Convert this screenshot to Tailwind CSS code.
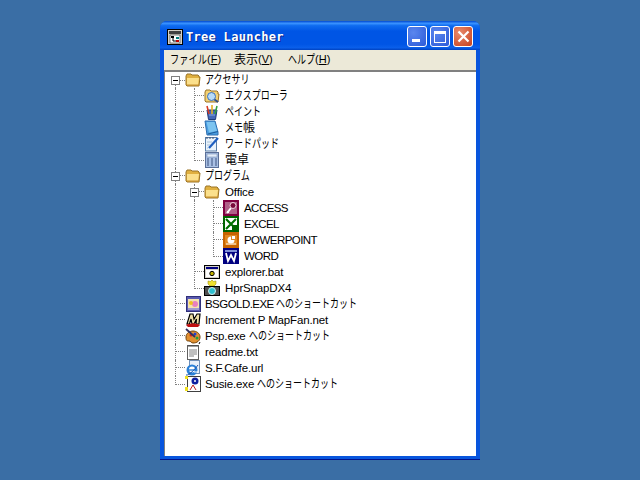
<!DOCTYPE html>
<html lang="en">
    <head>
        <meta charset="UTF-8" />
        <title>Tree Launcher</title>
        <script src="https://cdn.jsdelivr.net/npm/@tailwindcss/browser@4"></script>
    </head>
    <body class="bg-[#3a6ea5] h-screen overflow-hidden pt-[21px] pl-[160px] font-['Liberation_Sans','Noto_Sans_CJK_JP',sans-serif] text-[11.5px] text-black">
        <div class="w-[320px] h-[439px] flex flex-col rounded-t-[7px] overflow-hidden bg-[#0855dd] border-b border-[#00138c]">
            <!-- title bar -->
            <div class="h-[29px] shrink-0 flex items-center pt-[2px] pl-[7px] pr-[7px] bg-[linear-gradient(to_bottom,#0048d0_0%,#3a93ff_8%,#0f6cf0_16%,#0055e5_35%,#0055e5_80%,#0a5fea_92%,#0042c0_100%)]">
                <svg width="16" height="16" viewBox="0 0 16 16" class="shrink-0">
                    <rect x="0.5" y="0.5" width="15" height="15" fill="#d4d0c8" stroke="#000" />
                    <rect x="2" y="2" width="12" height="3" fill="#404040" />
                    <rect x="3" y="6" width="10" height="8" fill="#fff" stroke="#000" stroke-width="0.5" />
                    <rect x="4" y="7" width="3" height="2" fill="#000" />
                    <path d="M6 9v3h3" stroke="#000" fill="none" />
                    <rect x="9" y="8" width="3" height="2" fill="#008080" />
                    <rect x="9" y="11" width="3" height="2" fill="#c00000" />
                </svg>
                <div class="ml-[3px] font-['DejaVu_Sans_Mono',monospace] font-bold text-[12px] tracking-[0.3px] text-white [text-shadow:1px_1px_0_#0a2a8c]">Tree Launcher</div>
                <div class="ml-auto flex gap-[3px]">
                    <div class="w-[20px] h-[21px] rounded-[3px] border border-white bg-[radial-gradient(circle_at_30%_30%,#5a86ee,#2c5ad8)] flex items-end pl-[4px] pb-[4px]">
                        <div class="w-[8px] h-[3px] bg-white"></div>
                    </div>
                    <div class="w-[20px] h-[21px] rounded-[3px] border border-white bg-[radial-gradient(circle_at_30%_30%,#5a86ee,#2c5ad8)] flex items-center justify-center">
                        <div class="w-[12px] h-[12px] border border-white border-t-[3px]"></div>
                    </div>
                    <div class="w-[20px] h-[21px] rounded-[3px] border border-white bg-[radial-gradient(circle_at_30%_30%,#e88a6c,#c8401c)] flex items-center justify-center">
                        <svg width="13" height="13" viewBox="0 0 13 13"><path d="M1.5 1.5l10 10M11.5 1.5l-10 10" stroke="#fff" stroke-width="2.2" /></svg>
                    </div>
                </div>
            </div>

            <div class="flex-1 flex flex-col mx-[4px] mb-[3px] min-h-0">
                <!-- menu -->
                <div class="h-[20px] shrink-0 bg-[#ece9d8] flex items-center pl-[6px] text-[12px] whitespace-nowrap">
                    <div class="w-[64px] flex">
                        <span class="w-[37px]"><span class="inline-block origin-left scale-x-[0.77]">ファイル</span></span>
                        <span class="text-[11px]">(<span class="underline">F</span>)</span>
                    </div>
                    <div class="w-[54px] flex">
                        <span>表示</span>
                        <span class="text-[11px]">(<span class="underline">V</span>)</span>
                    </div>
                    <div class="flex">
                        <span class="w-[27px]"><span class="inline-block origin-left scale-x-[0.75]">ヘルプ</span></span>
                        <span class="text-[11px]">(<span class="underline">H</span>)</span>
                    </div>
                </div>
                <!-- tree -->
                <div id="tree" class="flex-1 bg-white border-t-2 border-l border-[#808080] pl-[1px] min-h-0"></div>
            </div>
        </div>

        <script>
            // connector cells: I = pass through, T = branch, L = last branch
            const cells = {
                I: `<div class="w-[19px] h-4 pl-[9px] shrink-0"><div class="h-4 border-l border-[#808080] border-dotted"></div></div>`,
                T: `<div class="w-[19px] h-4 pl-[9px] shrink-0"><div class="h-4 border-l border-[#808080] border-dotted"><div class="h-2 border-b border-[#808080] border-dotted"></div></div></div>`,
                L: `<div class="w-[19px] h-4 pl-[9px] shrink-0"><div class="h-[9px] border-l border-b border-[#808080] border-dotted"></div></div>`,
                // expander on a branch
                X: `<div class="relative w-[19px] h-4 pl-[9px] shrink-0"><div class="h-4 border-l border-[#808080] border-dotted"><div class="h-2 border-b border-[#808080] border-dotted"></div></div><div class="absolute left-[5px] top-[4px] w-[9px] h-[9px] bg-white border border-[#808080] flex items-center justify-center"><div class="w-[5px] h-px bg-black"></div></div></div>`,
                // expander on the very first row, no line above it
                F: `<div class="relative w-[19px] h-4 pl-[9px] shrink-0"><div class="mt-2 h-2 border-l border-t border-[#808080] border-dotted"></div><div class="absolute left-[5px] top-[4px] w-[9px] h-[9px] bg-white border border-[#808080] flex items-center justify-center"><div class="w-[5px] h-px bg-black"></div></div></div>`,
            };

            const svg = (body) => `<svg width="16" height="16" viewBox="0 0 16 16" class="shrink-0 bg-white">${body}</svg>`;

            const icons = {
                folder: svg(`<path d="M1 4l1-2h4l1 1h6l1 1v1h1l-1 9H2l-1-1z" fill="#e0b040" stroke="#9a7428" /><path d="M2 6h12l-1 7H2z" fill="#fbe08c" /><path d="M2 13h12" stroke="#c89030" />`),
                explorer: svg(`<path d="M1 4l1-2h4l1 1h6l1 1v2h1l-1 8H2l-1-1z" fill="#f4d274" stroke="#9a7428" /><circle cx="7.500" cy="8.500" r="4" fill="#b8dcf8" stroke="#3870c0" /><path d="M10.500 11.500l3.500 2.500" stroke="#30508a" stroke-width="2" />`),
                paint: svg(`<path d="M3 6h10l-1.500 9.500h-7z" fill="#4468b8" stroke="#1d3a7a" /><path d="M5 10l-2-8" stroke="#d83a20" stroke-width="1.600" /><path d="M8 10l0-9" stroke="#e8b020" stroke-width="1.600" /><path d="M11 10l2-8" stroke="#30a040" stroke-width="1.600" /><path d="M5 11h6" stroke="#8aa8e0" />`),
                memo: svg(`<path d="M1 1h10l3 11v3H3z" fill="#4a9ee0" stroke="#2f6fb0" /><path d="M2.500 2h8l2.500 9-8 1.500z" fill="#7cc4f0" /><path d="M4 14l10-2.500" stroke="#1e5c98" />`),
                wordpad: svg(`<rect x="1.500" y="1.500" width="11" height="13.500" fill="#eaf3fb" stroke="#5a7fa8" /><path d="M5 12L14 2" stroke="#1f5fc0" stroke-width="2.200" /><path d="M3 1v2M6 1v2M9 1v2" stroke="#405070" /><path d="M3 6h5M3 9h3M3 12h1" stroke="#a8c0d8" />`),
                calc: svg(`<rect x="1.500" y="0.500" width="13" height="15" fill="#a9c0e4" stroke="#5b6f96" /><rect x="3" y="2" width="10" height="3" fill="#e4eefa" stroke="#6880a8" stroke-width="0.500" /><path d="M3 7h2M7 7h2M11 7h2M3 9h2M7 9h2M11 9h2M3 11h2M7 11h2M11 11h2M3 13h2M7 13h2M11 13h2" stroke="#3f5580" />`),
                access: svg(`<rect width="16" height="16" fill="#800040" /><rect x="2" y="2" width="12" height="12" fill="#b06088" /><path d="M4 13l4-5" stroke="#fff" stroke-width="2" /><path d="M4 11l2 2" stroke="#fff" /><circle cx="10" cy="5.500" r="3" fill="#7a0a3c" stroke="#f0d0e0" />`),
                excel: svg(`<rect width="16" height="16" fill="#006400" /><rect x="2" y="2" width="12" height="12" fill="#fff" /><path d="M3 3l10 10M13 3L3 13" stroke="#007000" stroke-width="2.200" /><rect x="9" y="9" width="5" height="5" fill="#006400" />`),
                ppt: svg(`<rect width="16" height="16" fill="#c86400" /><rect x="2" y="3" width="12" height="10" fill="#e08820" /><path d="M8 4.500a3.500 3.500 0 1 0 3.500 3.500H8z" fill="#fff" /><path d="M9 4h3v3H9z" fill="#fff" /><path d="M3 12h10" stroke="#fff" />`),
                word: svg(`<rect width="16" height="16" fill="#000080" /><rect x="2" y="2" width="12" height="2" fill="#8090d8" /><path d="M3 5l2 8 3-6 3 6 2-8" stroke="#fff" stroke-width="1.800" fill="none" />`),
                bat: svg(`<rect x="0.500" y="1.500" width="15" height="13" fill="#d4d0c8" stroke="#000" /><rect x="2" y="3" width="12" height="2" fill="#000080" /><rect x="2" y="6" width="12" height="7" fill="#fff" /><circle cx="8" cy="9.500" r="2.200" fill="#c0b000" stroke="#000" />`),
                snap: svg(`<path d="M8 0l1.500 1.500L12 1l0 3-2 2H6L4 4V1l2.500.5z" fill="#f0e030" stroke="#908000" stroke-width="0.500" /><rect x="0.500" y="6.500" width="15" height="9" fill="#505050" stroke="#000" /><circle cx="8" cy="11" r="3.500" fill="#30c0d0" stroke="#d0f0f0" />`),
                gold: svg(`<rect x="1.500" y="0.500" width="14" height="15" fill="#5a5ab0" stroke="#30307a" /><rect x="3" y="3" width="11" height="9" fill="#f4e4b0" /><circle cx="10" cy="8" r="3" fill="#e880c0" /><circle cx="6" cy="7" r="2" fill="#f0c020" /><path d="M3 13h11" stroke="#e8e0f0" />`),
                map: svg(`<path d="M2 12L5 2h3l1 5 3-5h3l-1 10h-3l.5-5L9 12H7L6 7l-1.500 5z" fill="#f0e0a8" stroke="#000" stroke-width="1.200" /><path d="M1 13c4-2 10-2 14 0l-2 2H3z" fill="#c01010" />`),
                psp: svg(`<path d="M1 9c0-4 4-6 7-6s7 2 7 6-3 6-7 6c-2 0-2-2-4-2s-3 0-3-4z" fill="#e09030" stroke="#70400a" /><circle cx="6" cy="7" r="1.500" fill="#d02020" /><circle cx="10" cy="6" r="1.500" fill="#2040d0" /><circle cx="12" cy="10" r="1.500" fill="#20a040" /><path d="M1 1l9 8" stroke="#303060" stroke-width="1.800" /><path d="M15 14l-1 2" stroke="#000" />`),
                txt: svg(`<rect x="2.500" y="1.500" width="11" height="14" fill="#fff" stroke="#606060" /><path d="M4 1v2M6 1v2M8 1v2M10 1v2M12 1v2" stroke="#404040" /><path d="M4 6h8M4 8h8M4 10h8M4 12h5" stroke="#808080" />`),
                ie: svg(`<rect x="4.500" y="0.500" width="10" height="13" fill="#e8f0fa" stroke="#7090b8" /><circle cx="7" cy="10" r="5.500" fill="#2a80d8" /><circle cx="7" cy="9.500" r="3" fill="#fff" /><path d="M4 10h6" stroke="#2a80d8" stroke-width="1.400" /><path d="M9 12h4" stroke="#fff" /><path d="M1 15c3 1 9-6 12-10" stroke="#1a50a8" fill="none" />`),
                susie: svg(`<rect x="2.500" y="0.500" width="13" height="15" fill="#fff" stroke="#404040" /><circle cx="10" cy="5" r="3.500" fill="#1020a0" /><circle cx="10" cy="5" r="1" fill="#fff" /><path d="M5 14l3-5 3 5" stroke="#c02020" fill="none" /><path d="M0 0h3v3H0zM0 11h3v4H0z" fill="#f0e020" />`),
            };

            // label = [latin part, kana part, kanji part]; caps words get squeezed to the bitmap font's width
            const rows = [
                ["F", "folder", "", "アクセサリ"],
                ["IT", "explorer", "", "エクスプローラ"],
                ["IT", "paint", "", "ペイント"],
                ["IT", "memo", "", "メモ", "帳"],
                ["IT", "wordpad", "", "ワードパッド"],
                ["IL", "calc", "", "", "電卓"],
                ["X", "folder", "", "プログラム"],
                ["IX", "folder", "Office"],
                ["IIT", "access", "ACCESS"],
                ["IIT", "excel", "EXCEL"],
                ["IIT", "ppt", "POWERPOINT"],
                ["IIL", "word", "WORD"],
                ["IT", "bat", "explorer.bat"],
                ["IL", "snap", "HprSnapDX4"],
                ["T", "gold", "BSGOLD.EXE ", "へのショートカット"],
                ["T", "map", "Increment P MapFan.net"],
                ["T", "psp", "Psp.exe ", "へのショートカット"],
                ["T", "txt", "readme.txt"],
                ["T", "ie", "S.F.Cafe.url"],
                ["L", "susie", "Susie.exe ", "へのショートカット"],
            ];

            const capsOnly = /^[A-Z. ]+$/;

            document.getElementById("tree").innerHTML = rows
                .map(([prefix, icon, latin, kana, kanji]) => {
                    const connectors = [...prefix].map((c) => cells[c]).join("");
                    const latinPart = !latin
                        ? ""
                        : capsOnly.test(latin)
                          ? `<span class="tracking-[-0.55px] whitespace-pre">${latin}</span>`
                          : `<span class="tracking-[-0.15px] whitespace-pre">${latin}</span>`;
                    let kanaPart = "";
                    if (kana) {
                        const width = Math.round(kana.length * 9);
                        kanaPart = `<span class="inline-block text-[12px]" style="width:${width}px"><span class="inline-block origin-left scale-x-[0.75] whitespace-nowrap">${kana}</span></span>`;
                    }
                    const kanjiPart = kanji ? `<span class="text-[12px]">${kanji}</span>` : "";
                    const gap = prefix.length > 1 ? "ml-[5px]" : "ml-[4px]";
                    return `<div class="flex h-4 leading-4">${connectors}${icons[icon]}<div class="${gap} whitespace-nowrap">${latinPart}${kanaPart}${kanjiPart}</div></div>`;
                })
                .join("");
        </script>
    </body>
</html>
